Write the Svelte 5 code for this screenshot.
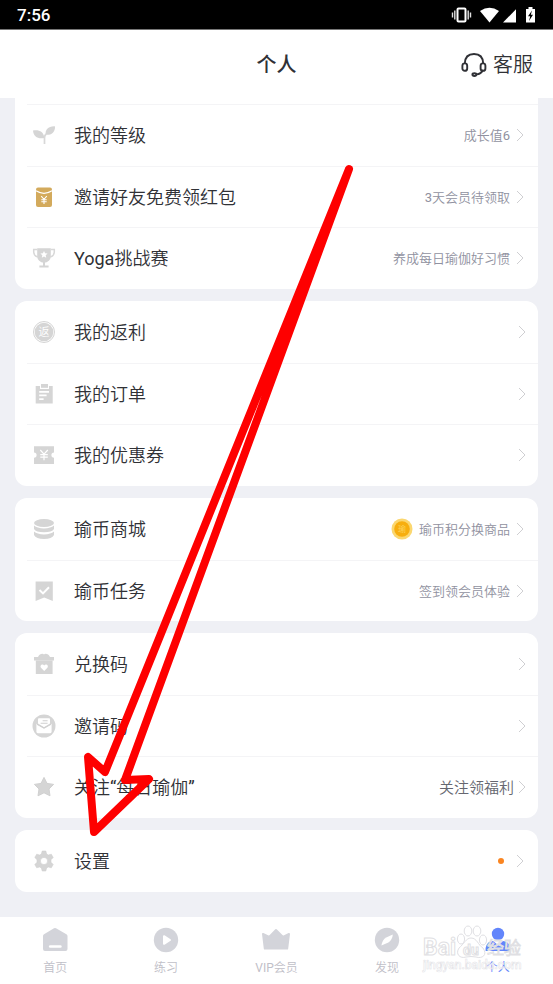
<script>
  const groups = [
    {
      rows: [
        { icon: 'sprout', label: '我的等级', note: '成长值6' },
        { icon: 'packet', label: '邀请好友免费领红包', note: '3天会员待领取' },
        { icon: 'trophy', label: 'Yoga挑战赛', note: '养成每日瑜伽好习惯' }
      ]
    },
    {
      wide: true,
      rows: [
        { icon: 'rebate', label: '我的返利' },
        { icon: 'order', label: '我的订单' },
        { icon: 'coupon', label: '我的优惠券' }
      ]
    },
    {
      rows: [
        { icon: 'coins', label: '瑜币商城', note: '瑜币积分换商品', coin: true },
        { icon: 'task', label: '瑜币任务', note: '签到领会员体验' }
      ]
    },
    {
      wide: true,
      rows: [
        { icon: 'gift', label: '兑换码' },
        { icon: 'mail', label: '邀请码' },
        { icon: 'star', label: '关注“每日瑜伽”', note: '关注领福利', strong: true }
      ]
    },
    { rows: [{ icon: 'gear', label: '设置', dot: true }] }
  ];

  const tabs = [
    { icon: 'home', label: '首页' },
    { icon: 'play', label: '练习' },
    { icon: 'crown', label: 'VIP会员' },
    { icon: 'compass', label: '发现' },
    { icon: 'person', label: '个人', active: true }
  ];
</script>

{#snippet rowIcon(name)}
  <svg class="icon" viewBox="0 0 24 24" aria-hidden="true">
    {#if name === 'sprout'}
      <path d="M1 7.6C7 6.6 11.6 8.6 12.4 15C6.2 16.4 1.4 13.8 1 7.6Z" />
      <path d="M23 3.4C23.2 9.2 19.4 12.2 13.8 11.8C12.8 6.8 16.4 3 23 3.4Z" />
      <path d="M14.2 11Q12.6 12.4 12.5 14.6V21" fill="none" stroke="#d8d8d8" stroke-width="1.7" />
    {:else if name === 'packet'}
      <rect x="4" y="2.5" width="16" height="19.5" rx="2" fill="#d3aa5c" />
      <path d="M4 5.8Q12 11 20 5.8" fill="none" stroke="#fff" stroke-width="1.2" />
      <path d="M9.2 11.2L12 14.3L14.8 11.2M12 14.3V19M9.3 14.8H14.7M9.3 16.8H14.7" fill="none" stroke="#fff" stroke-width="1.1" />
    {:else if name === 'trophy'}
      <path d="M5.2 2.2H18.8V10A6.8 6.8 0 0 1 5.2 10Z" />
      <path d="M5.2 3.6H1.7V6.2Q2 10.2 6.2 11M18.8 3.6H22.3V6.2Q22 10.2 17.8 11" fill="none" stroke="#d8d8d8" stroke-width="1.5" />
      <path d="M11 16H13V19.6H16.6V21.6H7.4V19.6H11Z" />
      <path d="M12 5L13.1 7.3L15.6 7.6L13.7 9.3L14.2 11.8L12 10.6L9.8 11.8L10.3 9.3L8.4 7.6L10.9 7.3Z" fill="#fff" />
    {:else if name === 'rebate'}
      <circle cx="12" cy="12" r="10.5" fill="none" stroke="#d4d4d4" />
      <circle cx="12" cy="12" r="9.3" />
      <text x="12" y="16" font-size="11" text-anchor="middle" fill="#fff">返</text>
    {:else if name === 'order'}
      <path d="M3.7 4H8V7H17V4H20.7V21.5H3.7Z" />
      <path d="M9 2H16V5.8H9Z" />
      <path d="M7.2 9.8H17M7.2 13.4H14.6M7.2 17.2H11.6" stroke="#fff" stroke-width="1.8" />
    {:else if name === 'coupon'}
      <path d="M2 3.2H22V9.5A2.6 2.6 0 0 0 22 14.7V21H2V14.7A2.6 2.6 0 0 0 2 9.5Z" />
      <path d="M8.3 7L12 11.2L15.8 7M12 11.2V17.2M8.3 11.6H15.8M8.3 14.2H15.8" fill="none" stroke="#fff" stroke-width="1.2" />
    {:else if name === 'coins'}
      <ellipse cx="12" cy="6" rx="10" ry="4" />
      <path d="M2 8.6Q5 11.4 12 11.4T22 8.6V12Q20 15.2 12 15.2T2 12Z" />
      <path d="M2 14.6Q5 17.4 12 17.4T22 14.6V18Q20 22 12 22T2 18Z" />
    {:else if name === 'task'}
      <path d="M3.6 2.5H20.8V22L12.2 18.4L3.6 22Z" />
      <path d="M7.5 11L11 14.4L17 8.2" fill="none" stroke="#fff" stroke-width="2" />
    {:else if name === 'gift'}
      <path d="M2 5H6Q7.6 1.8 10.4 1.8Q11.4 1.8 12 2.6Q12.6 1.8 13.6 1.8Q16.4 1.8 18 5H22V8.4H2Z" />
      <path d="M3.8 8.4H20.6V22H3.8Z" />
      <path d="M12.2 19L9 15.8C7.4 13.7 10.4 11.2 12.2 13.5C14 11.2 17 13.7 15.4 15.8Z" fill="#fff" />
    {:else if name === 'mail'}
      <circle cx="12" cy="12" r="11.5" />
      <path d="M6 9.6V5.2Q6 4.2 7 4.2H17Q18 4.2 18 5.2V9.6L12 13.2Z" fill="#fff" />
      <path d="M4.4 9.8L12 14.6L19.6 9.8V17.8Q19.6 19.2 18.2 19.2H5.8Q4.4 19.2 4.4 17.8Z" fill="#fff" />
      <path d="M5 10.2L12 14L19 10.2M10.6 6.7H15.6M8.6 9.3H15.6" fill="none" stroke="#d0d0d0" stroke-width="1.1" />
    {:else if name === 'star'}
      <path d="M12 2.4L15 8.4L21.6 9.4L17 14L18 20.8L12 17.8L6 20.8L7 14L2.4 9.4L9 8.4Z" stroke="#d0d0d0" stroke-width="1" stroke-linejoin="round" />
    {:else}
      <path fill-rule="evenodd" d="M10.2 2H13.8L14.6 5L16.3 6L19.3 5.2L21.2 8.5L19 10.7V13.3L21.2 15.5L19.3 18.8L16.3 18L14.6 19L13.8 22H10.2L9.4 19L7.7 18L4.7 18.8L2.8 15.5L5 13.3V10.7L2.8 8.5L4.7 5.2L7.7 6L9.4 5ZM12 8.4A3.6 3.6 0 1 0 12 15.6A3.6 3.6 0 1 0 12 8.4Z" stroke="#d0d0d0" stroke-width="0.6" stroke-linejoin="round" />
    {/if}
  </svg>
{/snippet}

{#snippet tabIcon(name)}
  <svg class="tab-icon" viewBox="0 0 30 26" aria-hidden="true">
    {#if name === 'home'}
      <path d="M3 9Q3 7.8 4 7.2L14 1.3Q15 0.8 16 1.3L26.4 7.2Q27.5 7.8 27.5 9V22Q27.5 24 25.5 24H5Q3 24 3 22Z" />
      <path d="M10.2 19.5H20.4" stroke="#fff" stroke-width="2.6" stroke-linecap="round" />
    {:else if name === 'play'}
      <circle cx="15" cy="13" r="12.2" />
      <path d="M13 9.2L19 13L13 16.8Z" fill="#fff" stroke="#fff" stroke-width="2" stroke-linejoin="round" />
    {:else if name === 'crown'}
      <path d="M2 7L8.2 10L15 3L22 10L28 7L26.2 21.6H3.8Z" stroke="#d3d4da" stroke-width="2" stroke-linejoin="round" />
    {:else if name === 'compass'}
      <circle cx="15" cy="13" r="12.2" />
      <path d="M20.8 7.6Q20.4 13 16.4 15.4L9.4 18.6Q10.4 12.4 14.2 10.4Z" fill="#fff" />
    {:else}
      <circle cx="15" cy="7" r="6.2" />
      <path d="M2.6 24V21Q4 14.2 10 14L15 18L20 14Q26 14.2 27.4 21V24Z" />
    {/if}
  </svg>
{/snippet}

<div class="page">
  <div class="status">
    <span>7:56</span>
    <svg width="86" height="18" viewBox="0 0 86 18" fill="#fff" aria-hidden="true">
      <rect x="7.5" y="2.5" width="8" height="13" rx="1" fill="none" stroke="#fff" stroke-width="2" />
      <path d="M2.5 6.5V11.5M4.8 4.5V13.5M18.2 4.5V13.5M20.5 6.5V11.5" stroke="#e0e0e0" stroke-width="1.4" />
      <path d="M30 5Q39.5 -1.5 49 5L39.5 16.5Z" />
      <path d="M53 16.5L66 3.2V16.5Z" />
      <path d="M76 3H78.5V1H82.5V3H85V16.6H76Z" />
      <path d="M82 4.5L78 10.2H80.2L79 15L83 8.8H80.8Z" fill="#000" />
    </svg>
  </div>

  <header>
    <h1>个人</h1>
    <button class="service">
      <svg width="26" height="26" viewBox="0 0 26 26" fill="none" stroke="#303136" stroke-width="1.9" aria-hidden="true">
        <path d="M3.8 11.5C4 5 7.6 2 13 2S22 5 22.2 11.5M22 18Q20 22 15.6 22.4" />
        <rect x="1.4" y="11.4" width="4.8" height="7.4" rx="2.4" />
        <rect x="19.6" y="11.4" width="4.8" height="7.4" rx="2.4" />
        <ellipse cx="13.4" cy="22.6" rx="2" ry="1.4" />
      </svg>
      <span>客服</span>
    </button>
  </header>

  <main>
    {#each groups as group}
      <section class:wide={group.wide}>
        {#each group.rows as row}
          <button class="row">
            {@render rowIcon(row.icon)}
            <span class="label">{row.label}</span>
            {#if row.coin}
              <svg class="coin" viewBox="0 0 22 22" aria-hidden="true">
                <circle cx="11" cy="11" r="10.5" fill="#fbd770" />
                <circle cx="11" cy="11" r="7.8" fill="#f7ae0e" />
                <text x="11" y="14" font-size="8" text-anchor="middle" fill="#fcd45e">瑜</text>
              </svg>
            {/if}
            {#if row.note}<span class="note" class:strong={row.strong}>{row.note}</span>{/if}
            {#if row.dot}<span class="dot"></span>{/if}
            <svg class="chevron" viewBox="0 0 8 14" aria-hidden="true">
              <path d="M1 1L7 7L1 13" fill="none" stroke="#cfcfd2" stroke-width="1" />
            </svg>
          </button>
        {/each}
      </section>
    {/each}
  </main>

  <nav>
    {#each tabs as tab}
      <a href="#{tab.icon}" class:active={tab.active}>
        {@render tabIcon(tab.icon)}
        <span>{tab.label}</span>
      </a>
    {/each}
    <svg class="watermark" viewBox="0 0 104 54" aria-hidden="true">
      <g fill="#fff" fill-opacity="0.6" stroke="#dfdfe3" stroke-width="1">
        <ellipse cx="41" cy="17" rx="3.6" ry="5" />
        <ellipse cx="48" cy="9" rx="3.8" ry="5" />
        <ellipse cx="57" cy="9" rx="3.8" ry="5" />
        <ellipse cx="63" cy="18" rx="3.6" ry="5" />
        <path d="M51 16C57 16 58 23 63 26C68 33 62 37 56 35Q51 34 46 35C40 37 35 32 39 26C44 22 46 16 51 16Z" />
        <text x="3" y="33" font-size="23" font-weight="700">Bai</text>
        <text x="43" y="33" font-size="14" font-weight="700">du</text>
        <text x="67" y="32" font-size="17" font-weight="500">经验</text>
      </g>
      <text x="3" y="47" font-size="12" font-weight="500" fill="#fff" stroke="#e2e2e6" stroke-width="0.5" fill-opacity="0.7">jingyan.baidu.com</text>
    </svg>
  </nav>

  <svg class="arrow" width="80" height="680" viewBox="0 0 80 680" aria-hidden="true">
    <path d="M265 9L21 612L4 597L10 672L65 619L41 620Z" fill="none" stroke="#fe0000" stroke-width="8" stroke-linejoin="round" />
  </svg>
</div>

<style>
  :global(body) {
    margin: 0;
    background: #eff0f5;
  }
  .page {
    position: relative;
    overflow: hidden;
    font-family: Roboto, 'Noto Sans CJK SC DemiLight', 'Noto Sans CJK SC', sans-serif;
    color: #303136;
  }
  button {
    border: 0;
    padding: 0;
    background: none;
    font: inherit;
    color: inherit;
    text-align: left;
    cursor: pointer;
  }
  svg {
    display: block;
    flex: none;
  }
  .status {
    box-sizing: border-box;
    height: 30px;
    padding: 0 17px;
    display: flex;
    align-items: center;
    justify-content: space-between;
    background: #000;
    border-bottom: 1px solid #777;
    color: #fff;
    font-size: 17px;
    font-weight: 500;
  }
  header {
    box-sizing: border-box;
    height: 68px;
    padding: 2px 20px 0;
    display: grid;
    grid-template-columns: 1fr auto 1fr;
    align-items: center;
    background: #fff;
  }
  h1 {
    grid-column: 2;
    margin: 0;
    font-family: Roboto, 'Noto Sans CJK SC', sans-serif;
    font-size: 20px;
    line-height: 28px;
    font-weight: 500;
  }
  .service {
    justify-self: end;
    display: flex;
    align-items: center;
    gap: 6px;
    font-size: 20px;
    line-height: 28px;
  }
  main {
    padding: 0 15px 25px;
    display: flex;
    flex-direction: column;
    gap: 12px;
  }
  section {
    background: #fff;
    border-radius: 12px;
  }
  section:first-child {
    padding-top: 6px;
    border-radius: 0 0 12px 12px;
  }
  .row {
    position: relative;
    box-sizing: border-box;
    width: 100%;
    height: 62px;
    padding: 0 14px 0 17px;
    display: flex;
    align-items: center;
    gap: 6px;
  }
  .row:nth-child(even) {
    height: 61px;
  }
  .row:not(:first-child)::before,
  section:first-child .row::before {
    content: '';
    position: absolute;
    top: 0;
    left: 12px;
    right: 0;
    height: 1px;
    background: #f4f4f6;
  }
  .wide .row {
    padding-right: 12px;
    gap: 4px;
  }
  .icon {
    width: 24px;
    height: 24px;
    fill: #d5d5d5;
  }
  .label {
    flex: 1;
    padding: 2px 0 0 12px;
    font-size: 18px;
    line-height: 26px;
  }
  .wide .label {
    padding-left: 14px;
  }
  .note {
    padding-top: 2px;
    font-size: 13px;
    line-height: 20px;
    color: #9091a0;
  }
  .note.strong {
    font-size: 15px;
    color: #666770;
  }
  .coin {
    width: 22px;
    height: 22px;
  }
  .dot {
    width: 6px;
    height: 6px;
    margin-right: 6px;
    border-radius: 50%;
    background: #fa8521;
  }
  .chevron {
    width: 8px;
    height: 14px;
  }
  nav {
    position: relative;
    box-sizing: border-box;
    height: 67px;
    padding-top: 10px;
    display: flex;
    background: #fff;
  }
  nav a {
    flex: 1;
    display: flex;
    flex-direction: column;
    align-items: center;
    gap: 7px;
    color: #bfc0c8;
    fill: #d3d4da;
    font-size: 12px;
    line-height: 16px;
    text-decoration: none;
  }
  nav a.active {
    color: #6285fb;
    fill: #6285fb;
  }
  .tab-icon {
    width: 30px;
    height: 26px;
  }
  .watermark {
    position: absolute;
    right: 29px;
    top: 5px;
    width: 104px;
    height: 54px;
    pointer-events: none;
  }
  .arrow {
    position: absolute;
    left: 84px;
    top: 160px;
    overflow: visible;
    pointer-events: none;
  }
</style>
